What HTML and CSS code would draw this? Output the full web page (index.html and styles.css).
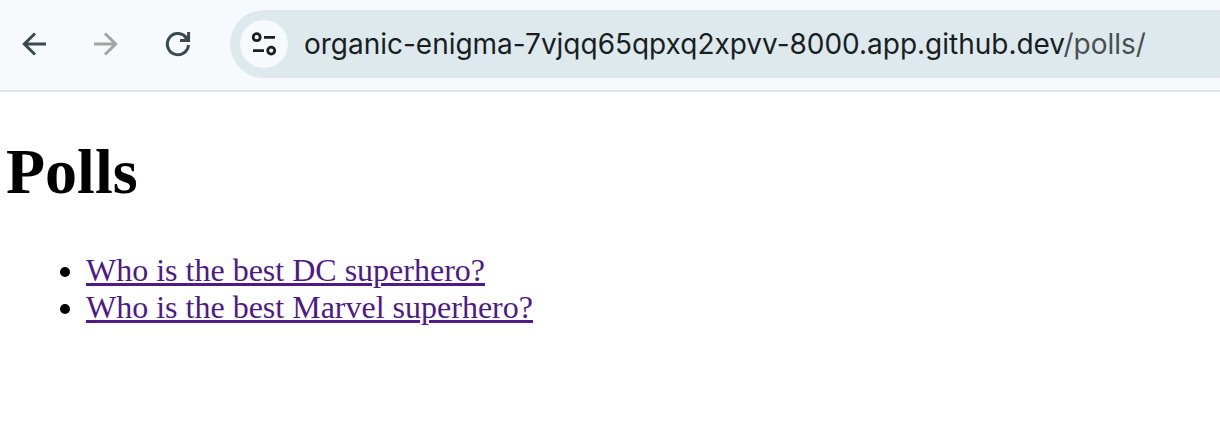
FILE: index.html
```html
<!DOCTYPE html>
<html lang="en">
<head>
<meta charset="utf-8">
<title>Polls</title>
<link rel="stylesheet" href="styles.css">
</head>
<body>
<header class="toolbar">
  <nav class="nav">
    <svg class="icon" viewBox="0 0 32 32"><path d="M28 16H6M17 5.500L6.300 16L17 26.500"/></svg>
    <svg class="icon icon-disabled" viewBox="0 0 32 32"><path d="M4 16h22M15 5.500L25.700 16L15 26.500"/></svg>
    <svg class="icon" viewBox="0 0 32 32"><path d="M26.500 17a10.600 10.600 0 1 1-3.100-8.500L26 11.500M26.600 4v8.400H18M22.500 8.500L26 12"/></svg>
  </nav>
  <div class="address">
    <span class="site-info"><svg class="tune" viewBox="0 0 28 28"><circle cx="6.700" cy="7.200" r="3.500"/><path d="M14 7.300h11M3 20.600h11"/><circle cx="21.200" cy="20.600" r="3.500"/></svg></span>
    <span class="url">organic-enigma-7vjqq65qpxq2xpvv-8000.app.github.dev<span class="path">/polls/</span></span>
  </div>
</header>
<main class="page">
  <h1 class="title">Polls</h1>
  <ul class="list">
    <li><a class="link" href="#">Who is the best DC superhero?</a></li>
    <li><a class="link" href="#">Who is the best Marvel superhero?</a></li>
  </ul>
</main>
</body>
</html>
```
FILE: styles.css
```css
body { margin: 0; background: #fff; overflow: hidden; }
.toolbar { display: flex; box-sizing: border-box; height: 92px; padding: 10px 0 0 18px; background: #f6fafd; border-bottom: 2px solid #dce5e7; }
.nav { display: flex; align-items: center; gap: 40px; height: 68px; width: 212px; flex: none; }
.icon { width: 32px; height: 32px; fill: none; stroke: #3a4a4d; stroke-width: 3; }
.icon-disabled { stroke: #a0a5a6; }
.address { display: flex; align-items: center; flex: 1; height: 68px; box-sizing: border-box; padding-left: 10px; background: #dee9ed; border-radius: 34px 0 0 34px; }
.site-info { display: flex; align-items: center; justify-content: center; width: 48px; height: 48px; border-radius: 50%; background: #f6fafd; }
.tune { width: 28px; height: 28px; fill: none; stroke: #191e1e; stroke-width: 2.8; }
.url { margin-left: 16px; font: 28px/40px Inter, sans-serif; letter-spacing: -0.015px; color: #191e1e; white-space: nowrap; }
.path { color: #484f50; }
.page { padding: 43px 6px 0; font-family: "Liberation Serif", serif; }
.title { margin: 0; font-size: 64px; line-height: 74px; }
.list { margin: 43px 0 0; padding-left: 80px; font-size: 32px; line-height: 37px; }
.link { color: #4e1b86; text-decoration-thickness: 3px; }
```
